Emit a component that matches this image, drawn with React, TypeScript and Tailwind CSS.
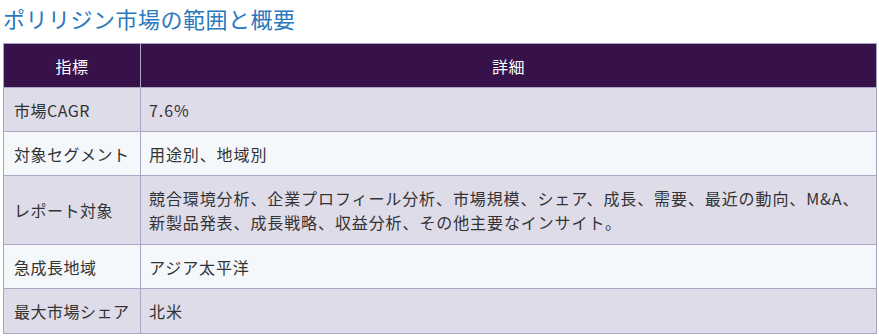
import React from "react";

const rows: { k: string; v: React.ReactNode; tall?: boolean }[] = [
  { k: "市場CAGR", v: "7.6%" },
  { k: "対象セグメント", v: "用途別、地域別" },
  {
    k: "レポート対象",
    v: (
      <>
        競合環境分析、企業プロフィール分析、市場規模、シェア、成長、需要、最近の動向、M&amp;A、
        <br />
        新製品発表、成長戦略、収益分析、その他主要なインサイト。
      </>
    ),
    tall: true,
  },
  { k: "急成長地域", v: "アジア太平洋" },
  { k: "最大市場シェア", v: "北米" },
];

export default function App() {
  return (
    <div
      className="w-[879px] h-[336px] bg-white overflow-hidden"
      style={{ fontFamily: '"Noto Sans CJK JP", "Noto Sans", sans-serif' }}
    >
      <h2 className="pl-[3px] pt-[3px] h-[43px] text-[22px] leading-[30px] text-[#2b78bd] tracking-[0.5px]">
        ポリリジン市場の範囲と概要
      </h2>
      <table className="ml-[3px] w-[874px] border-collapse table-fixed text-[16px] tracking-[0.5px] text-[#333]">
        <colgroup>
          <col className="w-[137px]" />
          <col />
        </colgroup>
        <thead>
          <tr className="h-[44px] bg-[#36114a] text-white">
            <th className="border border-[#aba6c4] font-normal text-center">指標</th>
            <th className="border border-[#aba6c4] font-normal text-center">詳細</th>
          </tr>
        </thead>
        <tbody>
          {rows.map((r, i) => (
            <tr
              key={r.k}
              className={`${r.tall ? "h-[69px]" : i === 4 ? "h-[45px]" : "h-[44px]"} ${
                i % 2 === 0 ? "bg-[#dfdcea]" : "bg-[#f4f8fb]"
              }`}
            >
              <td className="border border-[#aba6c4] pl-[10px] pr-1 leading-[24px] whitespace-nowrap">
                {r.k}
              </td>
              <td className="border border-[#aba6c4] pl-[8px] pr-[2px] leading-[24px] tracking-[0.9px]">
                {r.v}
              </td>
            </tr>
          ))}
        </tbody>
      </table>
    </div>
  );
}
